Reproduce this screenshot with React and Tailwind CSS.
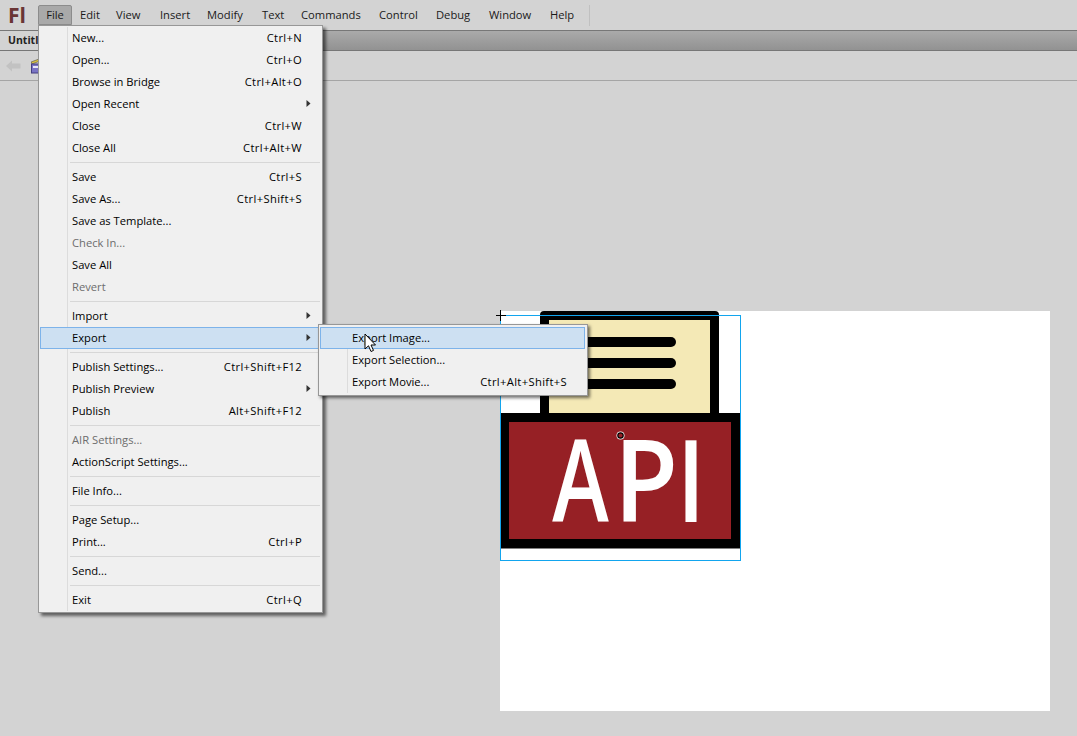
const font = { fontFamily: '"Open Sans", "Noto Sans", sans-serif' };

const fileMenu = [
  [["New...", "Ctrl+N"], ["Open...", "Ctrl+O"], ["Browse in Bridge", "Ctrl+Alt+O"], ["Open Recent", "", "arrow"], ["Close", "Ctrl+W"], ["Close All", "Ctrl+Alt+W"]],
  [["Save", "Ctrl+S"], ["Save As...", "Ctrl+Shift+S"], ["Save as Template..."], ["Check In...", "", "disabled"], ["Save All"], ["Revert", "", "disabled"]],
  [["Import", "", "arrow"], ["Export", "", "arrow active"]],
  [["Publish Settings...", "Ctrl+Shift+F12"], ["Publish Preview", "", "arrow"], ["Publish", "Alt+Shift+F12"]],
  [["AIR Settings...", "", "disabled"], ["ActionScript Settings..."]],
  [["File Info..."]],
  [["Page Setup..."], ["Print...", "Ctrl+P"]],
  [["Send..."]],
  [["Exit", "Ctrl+Q"]],
];

const menus = [
  ["Edit", "w-[36px]"],
  ["View", "w-[44px]"],
  ["Insert", "w-[47px]"],
  ["Modify", "w-[55px]"],
  ["Text", "w-[39px]"],
  ["Commands", "w-[78px]"],
  ["Control", "w-[57px]"],
  ["Debug", "w-[53px]"],
  ["Window", "w-[61px]"],
  ["Help", "w-[39px]"],
];

function Arrow() {
  return (
    <svg width="5" height="7" viewBox="0 0 5 7" className="absolute right-[11px] top-[7px]">
      <path d="M0.5 0 L4.5 3.5 L0.5 7 Z" fill="#333" />
    </svg>
  );
}

function Row({ label, shortcut, flags = "" }) {
  const active = flags.includes("active");
  const disabled = flags.includes("disabled");
  const pad = flags.includes("sub") ? "pr-[18px]" : "pr-[20px]";
  return (
    <div className={`relative flex h-[22px] items-center pl-[32px] ${pad} text-[11.2px] ${disabled ? "text-[#6d6d6d]" : "text-black"}`}>
      {active && <div className="absolute inset-0 border border-[#7db3ea] bg-[#cde0f2]" />}
      <span className="relative flex-1 whitespace-nowrap">{label}</span>
      {shortcut && <span className="relative whitespace-nowrap tracking-[0.35px]">{shortcut}</span>}
      {flags.includes("arrow") && <Arrow />}
    </div>
  );
}

function Cursor() {
  return (
    <svg width="13" height="21" viewBox="0 0 13 21" className="absolute left-[364px] top-[333px]">
      <path d="M1 1 L1 16 L4.5 12.8 L7 18.5 L9.5 17.4 L7 12 L11.5 12 Z" fill="#fff" stroke="#000" strokeWidth="1" />
    </svg>
  );
}

function Artwork() {
  return (
    <svg width="260" height="270" viewBox="0 0 260 270" className="absolute left-[-10px] top-[-16px]">
      <path d="M50 20 a4 4 0 0 1 4 -4 H225 a4 4 0 0 1 4 4 V125 H50 Z" fill="#000" />
      <rect x="59" y="25" width="161" height="95" fill="#f4e9b6" />
      <rect x="70" y="42" width="116" height="10" rx="5" fill="#000" />
      <rect x="70" y="63" width="116" height="10" rx="5" fill="#000" />
      <rect x="70" y="84" width="116" height="10" rx="5" fill="#000" />
      <rect x="10" y="118" width="240" height="135" fill="#000" />
      <rect x="19" y="127" width="222" height="117" fill="#962025" />
      <g fill="#fff" fontSize="114" textAnchor="middle" style={font}>
        <text transform="translate(90.5 227) scale(0.75 1)" fontWeight="600">A</text>
        <text transform="translate(156 227) scale(0.92 1)" fontWeight="600">P</text>
        <text transform="translate(201 227) scale(0.82 1)" fontWeight="600">I</text>
      </g>
      <rect x="10" y="253" width="240" height="1" fill="#808080" />
      <rect x="10.5" y="20.5" width="240" height="245" fill="none" stroke="#12a5ee" />
      <circle cx="130.5" cy="140.5" r="4" fill="#fff" />
      <circle cx="130.5" cy="140.5" r="2.7" fill="#962025" stroke="#000" strokeWidth="1.2" />
      <path d="M6 20.5 H16 M10.5 15 V26" stroke="#000" strokeWidth="1" />
    </svg>
  );
}

export default function App() {
  return (
    <div className="relative h-[736px] w-[1077px] overflow-hidden bg-[#d3d3d3]" style={font}>
      <div className="flex h-[31px] items-center border-b border-[#777] pl-[8px] text-[11.2px] text-[#1a1a1a]">
        <span className="w-[30px] text-[21px] leading-none font-bold text-[#6a3535]">Fl</span>
        <div className="flex h-[20px] w-[34px] items-center justify-center rounded-t-[2px] border border-[#8c8c8c] bg-[#a9a9a9]">File</div>
        <div className="flex items-center">
          {menus.map(([m, w]) => (
            <span key={m} className={`${w} pl-[8px] whitespace-nowrap`}>{m}</span>
          ))}
          <div className="ml-[8px] h-[21px] w-px bg-[#c0c0c0]" />
        </div>
      </div>
      <div className="flex h-[20px] border-b border-[#777] bg-gradient-to-b from-[#aaaaaa] to-[#929292]">
        <div className="flex w-[100px] items-center bg-[#d3d3d3] pl-[8px] text-[10.5px] font-bold text-[#222]">Untitled-1</div>
      </div>
      <div className="flex h-[30px] items-center gap-[10px] border-b border-[#a5a5a5] pl-[6px]">
        <svg width="15" height="12" viewBox="0 0 15 12">
          <path d="M0 6 L6 0.5 V3.5 H14.5 V8.5 H6 V11.5 Z" fill="#c2c2c2" />
        </svg>
        <svg width="12" height="16" viewBox="0 0 12 16">
          <path d="M0 4 L8 1 L9 3 L1 6 Z" fill="#d9c345" stroke="#333" strokeWidth="0.5" />
          <rect x="0.5" y="6" width="10" height="9" fill="#7a74c4" stroke="#443f80" />
          <rect x="2" y="8" width="7" height="2" fill="#e8e8f8" />
        </svg>
      </div>
      <div className="flex justify-end pr-[27px] pt-[230px]">
        <div className="relative h-[400px] w-[550px] bg-white">
          <Artwork />
        </div>
      </div>

      <div className="absolute left-[38px] top-[25px] w-[285px] border border-[#979797] bg-[#f0f0f0] py-[1px] pl-[1px] shadow-[3px_3px_3px_rgba(0,0,0,0.55)]">
        <div className="absolute top-[1px] bottom-[1px] left-[28px] w-px bg-[#dcdcdc]" />
        {fileMenu.map((group, i) => (
          <div key={i}>
            {i > 0 && <div className="my-[3px] ml-[30px] mr-[2px] h-px bg-[#d7d7d7]" />}
            {group.map(([l, s, f]) => (
              <Row key={l} label={l} shortcut={s} flags={f} />
            ))}
          </div>
        ))}
      </div>

      <div className="absolute left-[318px] top-[324px] w-[270px] border border-[#979797] bg-[#f0f0f0] py-[2px] pl-[1px] pr-[2px] shadow-[2px_2px_3px_rgba(0,0,0,0.55)]">
        <div className="absolute top-[2px] bottom-[2px] left-[28px] w-px bg-[#dcdcdc]" />
        <Row label="Export Image..." flags="active" />
        <Row label="Export Selection..." />
        <Row label="Export Movie..." shortcut="Ctrl+Alt+Shift+S" flags="sub" />
      </div>
      <Cursor />
    </div>
  );
}
